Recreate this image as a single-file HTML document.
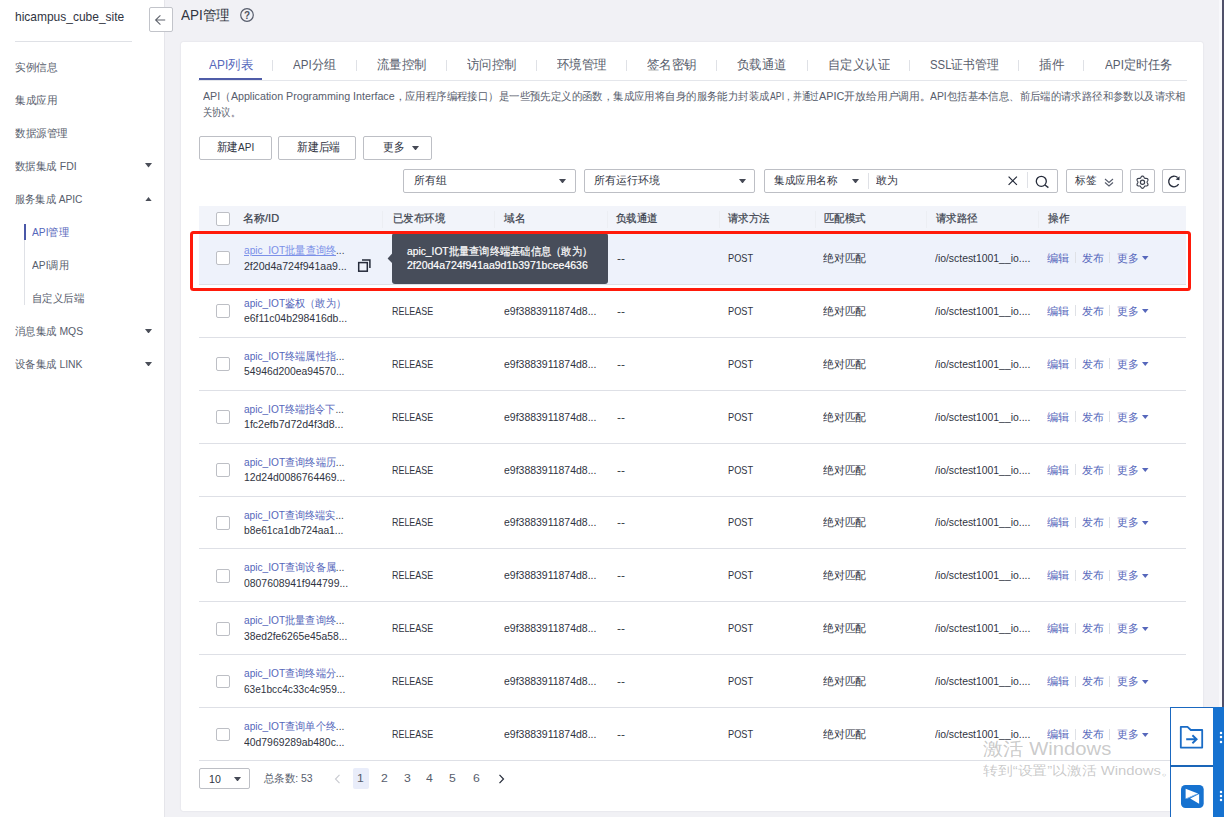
<!DOCTYPE html><html><head><meta charset="utf-8"><style>
html,body{margin:0;padding:0;}body{width:1224px;height:817px;overflow:hidden;position:relative;background:#f1f1f5;font-family:"Liberation Sans",sans-serif;}
.t{position:absolute;white-space:nowrap;line-height:16px;height:16px;transform-origin:0 50%;}
</style></head><body>
<div style="position:absolute;left:0px;top:0px;width:164.3px;height:817px;background:#fff"></div>
<div style="position:absolute;left:1219px;top:0px;width:2.6px;height:707px;background:#f8f8fb"></div>
<div style="position:absolute;left:1221.6px;top:0px;width:2.4px;height:707px;background:#50516a"></div>
<div style="position:absolute;left:164.3px;top:0px;width:1.2px;height:817px;background:#e5e5ea"></div>
<div style="position:absolute;left:181px;top:41.5px;width:1022px;height:769px;background:#fff;border-radius:2px;box-shadow:0 0 1.5px rgba(40,40,70,0.16)"></div>
<div style="position:absolute;left:15px;top:41px;width:117px;height:1px;background:#dfe1e6"></div>
<div style="position:absolute;left:24px;top:224px;width:1.3px;height:81px;background:#dfe1e6"></div>
<div style="position:absolute;left:24px;top:224px;width:1.6px;height:16px;background:#4a58a8"></div>
<svg style="position:absolute;left:144.5px;top:163.25px" width="7" height="4.5"><path d="M0 0H7L3.5 4.5Z" fill="#4a4e58"/></svg>
<svg style="position:absolute;left:144.5px;top:328.75px" width="7" height="4.5"><path d="M0 0H7L3.5 4.5Z" fill="#4a4e58"/></svg>
<svg style="position:absolute;left:144.5px;top:361.75px" width="7" height="4.5"><path d="M0 0H7L3.5 4.5Z" fill="#4a4e58"/></svg>
<svg style="position:absolute;left:144.5px;top:196.75px" width="7" height="4.5"><path d="M0 4.5H7L3.5 0Z" fill="#4a4e58"/></svg>
<div style="position:absolute;left:149px;top:7.4px;width:23.5px;height:24.2px;box-sizing:border-box;border:1px solid #c2c4ca;border-radius:2px;background:#fff"></div>
<svg style="position:absolute;left:149px;top:7.9px" width="24" height="24"><path d="M16.2 12H6.6M11.4 7.4L6.6 12L11.4 16.6" fill="none" stroke="#5f636d" stroke-width="1.05"/></svg>
<svg style="position:absolute;left:240px;top:8.2px" width="14" height="14"><circle cx="7" cy="7" r="6.3" fill="none" stroke="#575d6c" stroke-width="1.2"/><text x="7" y="10.6" text-anchor="middle" font-size="10" font-weight="bold" font-family="Liberation Sans" fill="#4f535e">?</text></svg>
<div style="position:absolute;left:272.4px;top:60px;width:1px;height:11px;background:#dfe1e6"></div>
<div style="position:absolute;left:356px;top:60px;width:1px;height:11px;background:#dfe1e6"></div>
<div style="position:absolute;left:445.5px;top:60px;width:1px;height:11px;background:#dfe1e6"></div>
<div style="position:absolute;left:535.8px;top:60px;width:1px;height:11px;background:#dfe1e6"></div>
<div style="position:absolute;left:626px;top:60px;width:1px;height:11px;background:#dfe1e6"></div>
<div style="position:absolute;left:716px;top:60px;width:1px;height:11px;background:#dfe1e6"></div>
<div style="position:absolute;left:806.5px;top:60px;width:1px;height:11px;background:#dfe1e6"></div>
<div style="position:absolute;left:908.8px;top:60px;width:1px;height:11px;background:#dfe1e6"></div>
<div style="position:absolute;left:1018px;top:60px;width:1px;height:11px;background:#dfe1e6"></div>
<div style="position:absolute;left:1083px;top:60px;width:1px;height:11px;background:#dfe1e6"></div>
<div style="position:absolute;left:198px;top:80px;width:989px;height:1px;background:#e4e6eb"></div>
<div style="position:absolute;left:198.7px;top:78.4px;width:63.3px;height:2px;background:#4f5ca8"></div>
<div style="position:absolute;left:199.2px;top:135.7px;width:72.5px;height:24.100000000000023px;box-sizing:border-box;border:1px solid #bdbfc5;border-radius:2px;background:#fff"></div>
<div style="position:absolute;left:278.3px;top:135.7px;width:77.69999999999999px;height:24.100000000000023px;box-sizing:border-box;border:1px solid #bdbfc5;border-radius:2px;background:#fff"></div>
<div style="position:absolute;left:363.4px;top:135.7px;width:68.90000000000003px;height:24.100000000000023px;box-sizing:border-box;border:1px solid #bdbfc5;border-radius:2px;background:#fff"></div>
<svg style="position:absolute;left:412.0px;top:145.75px" width="7" height="4.5"><path d="M0 0H7L3.5 4.5Z" fill="#454955"/></svg>
<div style="position:absolute;left:402.8px;top:169.3px;width:172.90000000000003px;height:23.299999999999983px;box-sizing:border-box;border:1px solid #bdbfc5;border-radius:2px;background:#fff"></div>
<svg style="position:absolute;left:559.1px;top:178.75px" width="7" height="4.5"><path d="M0 0H7L3.5 4.5Z" fill="#454955"/></svg>
<div style="position:absolute;left:583.5px;top:169.3px;width:171.70000000000005px;height:23.299999999999983px;box-sizing:border-box;border:1px solid #bdbfc5;border-radius:2px;background:#fff"></div>
<svg style="position:absolute;left:739.3px;top:178.75px" width="7" height="4.5"><path d="M0 0H7L3.5 4.5Z" fill="#454955"/></svg>
<div style="position:absolute;left:764px;top:169.3px;width:293.5999999999999px;height:23.299999999999983px;box-sizing:border-box;border:1px solid #bdbfc5;border-radius:2px;background:#fff"></div>
<svg style="position:absolute;left:851.5px;top:178.75px" width="7" height="4.5"><path d="M0 0H7L3.5 4.5Z" fill="#454955"/></svg>
<div style="position:absolute;left:867.5px;top:173px;width:1px;height:16px;background:#dfe1e6"></div>
<svg style="position:absolute;left:1008px;top:176.4px" width="9.5" height="9.5"><path d="M0.6 0.6L8.9 8.9M8.9 0.6L0.6 8.9" stroke="#252b3a" stroke-width="1.2"/></svg>
<div style="position:absolute;left:1026.7px;top:172px;width:1px;height:16px;background:#dfe1e6"></div>
<svg style="position:absolute;left:1035px;top:174.5px" width="15" height="14"><circle cx="6.3" cy="6.3" r="5" fill="none" stroke="#252b3a" stroke-width="1.3"/><path d="M10 10L13.4 12.6" stroke="#252b3a" stroke-width="1.4"/></svg>
<div style="position:absolute;left:1065.5px;top:169.3px;width:57.90000000000009px;height:23.299999999999983px;box-sizing:border-box;border:1px solid #bdbfc5;border-radius:2px;background:#fff"></div>
<svg style="position:absolute;left:1103.5px;top:178px" width="10" height="9"><path d="M1 1L5 4.5L9 1M1 4.5L5 8L9 4.5" fill="none" stroke="#575d6c" stroke-width="1.1"/></svg>
<div style="position:absolute;left:1130.4px;top:169.3px;width:25.09999999999991px;height:23.299999999999983px;box-sizing:border-box;border:1px solid #bdbfc5;border-radius:2px;background:#fff"></div>
<svg style="position:absolute;left:1135.2px;top:174.5px" width="15" height="15"><path d="M12.05 7.20L12.10 7.50L12.24 7.82L12.45 8.18L12.67 8.58L12.86 9.02L12.97 9.46L12.96 9.89L12.83 10.27L12.56 10.58L12.19 10.80L11.75 10.93L11.28 10.98L10.83 10.99L10.41 11.00L10.06 11.03L9.78 11.14L9.54 11.34L9.33 11.62L9.12 11.98L8.88 12.37L8.60 12.75L8.27 13.07L7.90 13.28L7.50 13.35L7.10 13.28L6.73 13.07L6.40 12.75L6.12 12.37L5.88 11.98L5.67 11.62L5.46 11.34L5.23 11.14L4.94 11.03L4.59 11.00L4.17 10.99L3.72 10.98L3.25 10.93L2.81 10.80L2.44 10.58L2.17 10.27L2.04 9.89L2.03 9.46L2.14 9.02L2.33 8.58L2.55 8.18L2.76 7.82L2.90 7.50L2.95 7.20L2.90 6.90L2.76 6.58L2.55 6.22L2.33 5.82L2.14 5.38L2.03 4.94L2.04 4.51L2.17 4.13L2.44 3.82L2.81 3.60L3.25 3.47L3.72 3.42L4.17 3.41L4.59 3.40L4.94 3.37L5.22 3.26L5.46 3.06L5.67 2.78L5.88 2.42L6.12 2.03L6.40 1.65L6.73 1.33L7.10 1.12L7.50 1.05L7.90 1.12L8.27 1.33L8.60 1.65L8.88 2.03L9.12 2.42L9.33 2.78L9.54 3.06L9.78 3.26L10.06 3.37L10.41 3.40L10.83 3.41L11.28 3.42L11.75 3.47L12.19 3.60L12.56 3.82L12.83 4.12L12.96 4.51L12.97 4.94L12.86 5.38L12.67 5.82L12.45 6.22L12.24 6.58L12.10 6.90L12.05 7.20Z" fill="none" stroke="#3a3f4c" stroke-width="1.15" stroke-linejoin="round"/><circle cx="7.5" cy="7.2" r="2.1" fill="none" stroke="#3a3f4c" stroke-width="1.2"/></svg>
<div style="position:absolute;left:1162.3px;top:169.3px;width:23.700000000000045px;height:23.299999999999983px;box-sizing:border-box;border:1px solid #bdbfc5;border-radius:2px;background:#fff"></div>
<svg style="position:absolute;left:1167px;top:175px" width="14" height="13"><path d="M10.6 2.6A5.3 5.3 0 1 0 11.6 9.2" fill="none" stroke="#252b3a" stroke-width="1.3"/><path d="M12.6 1.2L12.4 5.2L8.6 4.4Z" fill="#252b3a"/></svg>
<div style="position:absolute;left:198.7px;top:206.2px;width:987.3px;height:25.5px;background:#f2f4fa"></div>
<div style="position:absolute;left:216px;top:211.8px;width:13.6px;height:13.9px;box-sizing:border-box;border:1px solid #bdbfc5;border-radius:2px;background:#fff"></div>
<div style="position:absolute;left:382.3px;top:210.5px;width:1px;height:17px;background:#eceef3"></div>
<div style="position:absolute;left:494px;top:210.5px;width:1px;height:17px;background:#eceef3"></div>
<div style="position:absolute;left:606.5px;top:210.5px;width:1px;height:17px;background:#eceef3"></div>
<div style="position:absolute;left:718.8px;top:210.5px;width:1px;height:17px;background:#eceef3"></div>
<div style="position:absolute;left:814.7px;top:210.5px;width:1px;height:17px;background:#eceef3"></div>
<div style="position:absolute;left:925.8px;top:210.5px;width:1px;height:17px;background:#eceef3"></div>
<div style="position:absolute;left:1037.6px;top:210.5px;width:1px;height:17px;background:#eceef3"></div>
<div style="position:absolute;left:198.7px;top:232.0px;width:987.3px;height:52.4px;background:#eef2fb"></div>
<div style="position:absolute;left:198.7px;top:283.9px;width:987.3px;height:1px;background:#dee0e6"></div>
<div style="position:absolute;left:216px;top:251.4px;width:13.6px;height:13.9px;box-sizing:border-box;border:1px solid #bdbfc5;border-radius:2px;background:#fff"></div>
<div style="position:absolute;left:1075.2px;top:252.45px;width:1px;height:11px;background:#dfe1e6"></div>
<div style="position:absolute;left:1109.4px;top:252.45px;width:1px;height:11px;background:#dfe1e6"></div>
<svg style="position:absolute;left:1142.45px;top:256.45px" width="6.5" height="4"><path d="M0 0H6.5L3.25 4Z" fill="#5667bb"/></svg>
<div style="position:absolute;left:198.7px;top:336.79999999999995px;width:987.3px;height:1px;background:#dee0e6"></div>
<div style="position:absolute;left:216px;top:304.29999999999995px;width:13.6px;height:13.9px;box-sizing:border-box;border:1px solid #bdbfc5;border-radius:2px;background:#fff"></div>
<div style="position:absolute;left:1075.2px;top:305.34999999999997px;width:1px;height:11px;background:#dfe1e6"></div>
<div style="position:absolute;left:1109.4px;top:305.34999999999997px;width:1px;height:11px;background:#dfe1e6"></div>
<svg style="position:absolute;left:1142.45px;top:309.34999999999997px" width="6.5" height="4"><path d="M0 0H6.5L3.25 4Z" fill="#5667bb"/></svg>
<div style="position:absolute;left:198.7px;top:389.7px;width:987.3px;height:1px;background:#dee0e6"></div>
<div style="position:absolute;left:216px;top:357.2px;width:13.6px;height:13.9px;box-sizing:border-box;border:1px solid #bdbfc5;border-radius:2px;background:#fff"></div>
<div style="position:absolute;left:1075.2px;top:358.25px;width:1px;height:11px;background:#dfe1e6"></div>
<div style="position:absolute;left:1109.4px;top:358.25px;width:1px;height:11px;background:#dfe1e6"></div>
<svg style="position:absolute;left:1142.45px;top:362.25px" width="6.5" height="4"><path d="M0 0H6.5L3.25 4Z" fill="#5667bb"/></svg>
<div style="position:absolute;left:198.7px;top:442.59999999999997px;width:987.3px;height:1px;background:#dee0e6"></div>
<div style="position:absolute;left:216px;top:410.09999999999997px;width:13.6px;height:13.9px;box-sizing:border-box;border:1px solid #bdbfc5;border-radius:2px;background:#fff"></div>
<div style="position:absolute;left:1075.2px;top:411.15px;width:1px;height:11px;background:#dfe1e6"></div>
<div style="position:absolute;left:1109.4px;top:411.15px;width:1px;height:11px;background:#dfe1e6"></div>
<svg style="position:absolute;left:1142.45px;top:415.15px" width="6.5" height="4"><path d="M0 0H6.5L3.25 4Z" fill="#5667bb"/></svg>
<div style="position:absolute;left:198.7px;top:495.5px;width:987.3px;height:1px;background:#dee0e6"></div>
<div style="position:absolute;left:216px;top:463.0px;width:13.6px;height:13.9px;box-sizing:border-box;border:1px solid #bdbfc5;border-radius:2px;background:#fff"></div>
<div style="position:absolute;left:1075.2px;top:464.05px;width:1px;height:11px;background:#dfe1e6"></div>
<div style="position:absolute;left:1109.4px;top:464.05px;width:1px;height:11px;background:#dfe1e6"></div>
<svg style="position:absolute;left:1142.45px;top:468.05px" width="6.5" height="4"><path d="M0 0H6.5L3.25 4Z" fill="#5667bb"/></svg>
<div style="position:absolute;left:198.7px;top:548.4px;width:987.3px;height:1px;background:#dee0e6"></div>
<div style="position:absolute;left:216px;top:515.9px;width:13.6px;height:13.9px;box-sizing:border-box;border:1px solid #bdbfc5;border-radius:2px;background:#fff"></div>
<div style="position:absolute;left:1075.2px;top:516.95px;width:1px;height:11px;background:#dfe1e6"></div>
<div style="position:absolute;left:1109.4px;top:516.95px;width:1px;height:11px;background:#dfe1e6"></div>
<svg style="position:absolute;left:1142.45px;top:520.95px" width="6.5" height="4"><path d="M0 0H6.5L3.25 4Z" fill="#5667bb"/></svg>
<div style="position:absolute;left:198.7px;top:601.3px;width:987.3px;height:1px;background:#dee0e6"></div>
<div style="position:absolute;left:216px;top:568.8px;width:13.6px;height:13.9px;box-sizing:border-box;border:1px solid #bdbfc5;border-radius:2px;background:#fff"></div>
<div style="position:absolute;left:1075.2px;top:569.85px;width:1px;height:11px;background:#dfe1e6"></div>
<div style="position:absolute;left:1109.4px;top:569.85px;width:1px;height:11px;background:#dfe1e6"></div>
<svg style="position:absolute;left:1142.45px;top:573.85px" width="6.5" height="4"><path d="M0 0H6.5L3.25 4Z" fill="#5667bb"/></svg>
<div style="position:absolute;left:198.7px;top:654.1999999999999px;width:987.3px;height:1px;background:#dee0e6"></div>
<div style="position:absolute;left:216px;top:621.6999999999999px;width:13.6px;height:13.9px;box-sizing:border-box;border:1px solid #bdbfc5;border-radius:2px;background:#fff"></div>
<div style="position:absolute;left:1075.2px;top:622.75px;width:1px;height:11px;background:#dfe1e6"></div>
<div style="position:absolute;left:1109.4px;top:622.75px;width:1px;height:11px;background:#dfe1e6"></div>
<svg style="position:absolute;left:1142.45px;top:626.75px" width="6.5" height="4"><path d="M0 0H6.5L3.25 4Z" fill="#5667bb"/></svg>
<div style="position:absolute;left:198.7px;top:707.1px;width:987.3px;height:1px;background:#dee0e6"></div>
<div style="position:absolute;left:216px;top:674.6px;width:13.6px;height:13.9px;box-sizing:border-box;border:1px solid #bdbfc5;border-radius:2px;background:#fff"></div>
<div style="position:absolute;left:1075.2px;top:675.6500000000001px;width:1px;height:11px;background:#dfe1e6"></div>
<div style="position:absolute;left:1109.4px;top:675.6500000000001px;width:1px;height:11px;background:#dfe1e6"></div>
<svg style="position:absolute;left:1142.45px;top:679.6500000000001px" width="6.5" height="4"><path d="M0 0H6.5L3.25 4Z" fill="#5667bb"/></svg>
<div style="position:absolute;left:198.7px;top:759.9999999999999px;width:987.3px;height:1px;background:#dee0e6"></div>
<div style="position:absolute;left:216px;top:727.4999999999999px;width:13.6px;height:13.9px;box-sizing:border-box;border:1px solid #bdbfc5;border-radius:2px;background:#fff"></div>
<div style="position:absolute;left:1075.2px;top:728.55px;width:1px;height:11px;background:#dfe1e6"></div>
<div style="position:absolute;left:1109.4px;top:728.55px;width:1px;height:11px;background:#dfe1e6"></div>
<svg style="position:absolute;left:1142.45px;top:732.55px" width="6.5" height="4"><path d="M0 0H6.5L3.25 4Z" fill="#5667bb"/></svg>
<svg style="position:absolute;left:356px;top:258px" width="16" height="16"><rect x="2.7" y="4.6" width="8.6" height="8.6" fill="none" stroke="#252b3a" stroke-width="1.5"/><path d="M6 2.1H13.9V10" fill="none" stroke="#252b3a" stroke-width="1.5"/></svg>
<div style="position:absolute;left:392.2px;top:233px;width:215.5px;height:51.4px;background:#474d5a;border-radius:3px"></div>
<svg style="position:absolute;left:386.5px;top:252px" width="7" height="13"><path d="M6.5 0L0.6 6.4L6.5 12.6Z" fill="#474d5a"/></svg>
<div style="position:absolute;left:190px;top:231.1px;width:1000.6px;height:59.9px;box-sizing:border-box;border:3px solid #ff1a0a;border-radius:3.5px"></div>
<div style="position:absolute;left:199.2px;top:768px;width:51.3px;height:21px;box-sizing:border-box;border:1px solid #bdbfc5;border-radius:2px;background:#fff"></div>
<svg style="position:absolute;left:234.3px;top:776.55px" width="7" height="4.5"><path d="M0 0H7L3.5 4.5Z" fill="#454955"/></svg>
<svg style="position:absolute;left:333.5px;top:773.5px" width="7" height="10"><path d="M5.5 0.8L1.5 5L5.5 9.2" fill="none" stroke="#c8cad0" stroke-width="1.1"/></svg>
<div style="position:absolute;left:352.5px;top:768px;width:16.1px;height:21px;background:#e9edfa;border-radius:2px"></div>
<svg style="position:absolute;left:498px;top:773.5px" width="7" height="10"><path d="M1.5 0.8L5.5 5L1.5 9.2" fill="none" stroke="#252b3a" stroke-width="1.2"/></svg>
<div style="position:absolute;left:1170px;top:706.8px;width:54px;height:111px;background:#fff;box-sizing:border-box;border:1px solid #1a68c0;border-right:none"></div>
<div style="position:absolute;left:1213px;top:706.8px;width:11px;height:111px;background:#1672d0"></div>
<div style="position:absolute;left:1170px;top:765.3px;width:43px;height:1.5px;background:#1a65b8"></div>
<svg style="position:absolute;left:1179px;top:725px" width="26" height="25"><path d="M1.8 1.8H8.5L11.8 5H23.2V22.6H1.8Z" fill="none" stroke="#1a6cc6" stroke-width="1.8" stroke-linejoin="round"/><path d="M7.2 14.2H17.2M13.4 10.2L17.6 14.2L13.4 18.2" fill="none" stroke="#1a6cc6" stroke-width="1.9"/></svg>
<svg style="position:absolute;left:1180.5px;top:784.7px" width="23" height="23"><rect x="0" y="0" width="22.7" height="23" rx="4.5" fill="#1672d0"/><path d="M4.6 3.7L17 8.4L4.6 13.8Z" fill="#fff"/><path d="M9.2 13.5L18.1 8.9V18.7Z" fill="#fff"/><path d="M6 13.4L17 8.6" stroke="#8fbff0" stroke-width="0.8"/></svg>
<svg style="position:absolute;left:1218.7px;top:731.1px" width="4" height="4"><circle cx="2" cy="2" r="1.25" fill="#fff"/></svg>
<svg style="position:absolute;left:1218.7px;top:735.4px" width="4" height="4"><circle cx="2" cy="2" r="1.25" fill="#fff"/></svg>
<svg style="position:absolute;left:1218.7px;top:739.7px" width="4" height="4"><circle cx="2" cy="2" r="1.25" fill="#fff"/></svg>
<svg style="position:absolute;left:1218.7px;top:789.9px" width="4" height="4"><circle cx="2" cy="2" r="1.25" fill="#fff"/></svg>
<svg style="position:absolute;left:1218.7px;top:794.1px" width="4" height="4"><circle cx="2" cy="2" r="1.25" fill="#fff"/></svg>
<svg style="position:absolute;left:1218.7px;top:798.3px" width="4" height="4"><circle cx="2" cy="2" r="1.25" fill="#fff"/></svg>
<div class="t" id="t0" style="left:14.90px;top:8.60px;font-size:13px;color:#30343f;transform:scaleX(0.9213);">hicampus_cube_site</div>
<div class="t" id="t1" style="left:14.90px;top:58.90px;font-size:11px;color:#575d6c;transform:scaleX(0.9636);">实例信息</div>
<div class="t" id="t2" style="left:14.90px;top:91.90px;font-size:11px;color:#575d6c;transform:scaleX(0.9636);">集成应用</div>
<div class="t" id="t3" style="left:14.90px;top:124.90px;font-size:11px;color:#575d6c;transform:scaleX(0.9600);">数据源管理</div>
<div class="t" id="t4" style="left:14.90px;top:157.90px;font-size:11px;color:#575d6c;transform:scaleX(0.9524);">数据集成 FDI</div>
<div class="t" id="t5" style="left:14.90px;top:190.90px;font-size:11px;color:#575d6c;transform:scaleX(0.9280);">服务集成 APIC</div>
<div class="t" id="t6" style="left:32.30px;top:223.90px;font-size:11px;color:#5667bb;transform:scaleX(0.9287);">API管理</div>
<div class="t" id="t7" style="left:32.30px;top:256.90px;font-size:11px;color:#575d6c;transform:scaleX(0.9287);">API调用</div>
<div class="t" id="t8" style="left:32.30px;top:289.90px;font-size:11px;color:#575d6c;transform:scaleX(0.9527);">自定义后端</div>
<div class="t" id="t9" style="left:14.90px;top:322.90px;font-size:11px;color:#575d6c;transform:scaleX(0.9442);">消息集成 MQS</div>
<div class="t" id="t10" style="left:14.90px;top:355.90px;font-size:11px;color:#575d6c;transform:scaleX(0.9438);">设备集成 LINK</div>
<div class="t" id="t11" style="left:181.20px;top:7.20px;font-size:14px;color:#30343f;transform:scaleX(0.9648);">API管理</div>
<div class="t" id="t12" style="left:208.90px;top:57.30px;font-size:12.5px;color:#5667bb;transform:scaleX(0.9533);">API列表</div>
<div class="t" id="t13" style="left:292.90px;top:57.30px;font-size:12.5px;color:#575d6c;transform:scaleX(0.9273);">API分组</div>
<div class="t" id="t14" style="left:376.90px;top:57.30px;font-size:12.5px;color:#575d6c;transform:scaleX(0.9519);">流量控制</div>
<div class="t" id="t15" style="left:466.90px;top:57.30px;font-size:12.5px;color:#575d6c;transform:scaleX(0.9538);">访问控制</div>
<div class="t" id="t16" style="left:556.90px;top:57.30px;font-size:12.5px;color:#575d6c;transform:scaleX(0.9577);">环境管理</div>
<div class="t" id="t17" style="left:646.90px;top:57.30px;font-size:12.5px;color:#575d6c;transform:scaleX(0.9577);">签名密钥</div>
<div class="t" id="t18" style="left:736.90px;top:57.30px;font-size:12.5px;color:#575d6c;transform:scaleX(0.9519);">负载通道</div>
<div class="t" id="t19" style="left:827.70px;top:57.30px;font-size:12.5px;color:#575d6c;transform:scaleX(0.9523);">自定义认证</div>
<div class="t" id="t20" style="left:929.60px;top:57.30px;font-size:12.5px;color:#575d6c;transform:scaleX(0.9096);">SSL证书管理</div>
<div class="t" id="t21" style="left:1038.50px;top:57.30px;font-size:12.5px;color:#575d6c;transform:scaleX(0.9692);">插件</div>
<div class="t" id="t22" style="left:1104.90px;top:57.30px;font-size:12.5px;color:#575d6c;transform:scaleX(0.9382);">API定时任务</div>
<div class="t" id="t23" style="left:202.90px;top:88.30px;font-size:11px;color:#575d6c;transform:scaleX(0.9703);">API（Application Programming Interface，</div>
<div class="t" id="t24" style="left:405.20px;top:88.30px;font-size:11px;color:#575d6c;transform:scaleX(0.9465);">应用程序编程接口）是一些预先定义的函数，集成应用将自身的服务能力封装成</div>
<div class="t" id="t25" style="left:769.60px;top:88.30px;font-size:11px;color:#575d6c;transform:scaleX(0.7937);">API，并通过</div>
<div class="t" id="t26" style="left:818.60px;top:88.30px;font-size:11px;color:#575d6c;transform:scaleX(0.9834);">APIC开放给用户调用。</div>
<div class="t" id="t27" style="left:930.40px;top:88.30px;font-size:11px;color:#575d6c;transform:scaleX(0.9448);">API包括基本信息、前后端的请求路径和参数以及请求相</div>
<div class="t" id="t28" style="left:202.90px;top:103.60px;font-size:11px;color:#575d6c;transform:scaleX(0.8364);">关协议。</div>
<div class="t" id="t29" style="left:217.00px;top:138.90px;font-size:11.5px;color:#30343f;transform:scaleX(0.8743);">新建API</div>
<div class="t" id="t30" style="left:296.90px;top:138.90px;font-size:11.5px;color:#30343f;transform:scaleX(0.9021);">新建后端</div>
<div class="t" id="t31" style="left:382.50px;top:138.90px;font-size:11.5px;color:#30343f;transform:scaleX(0.8875);">更多</div>
<div class="t" id="t32" style="left:413.80px;top:171.90px;font-size:11px;color:#30343f;transform:scaleX(0.9788);">所有组</div>
<div class="t" id="t33" style="left:593.80px;top:171.90px;font-size:11px;color:#30343f;transform:scaleX(0.9970);">所有运行环境</div>
<div class="t" id="t34" style="left:773.80px;top:171.90px;font-size:11px;color:#30343f;transform:scaleX(0.9561);">集成应用名称</div>
<div class="t" id="t35" style="left:876.10px;top:171.90px;font-size:11px;color:#30343f;transform:scaleX(0.9909);">敢为</div>
<div class="t" id="t36" style="left:1074.60px;top:171.90px;font-size:11px;color:#30343f;transform:scaleX(0.9682);">标签</div>
<div class="t" id="t37" style="left:243.40px;top:210.30px;font-size:11px;color:#3a3f4c;transform:scaleX(1.0010);-webkit-text-stroke:0.2px #3a3f4c;">名称/ID</div>
<div class="t" id="t38" style="left:392.50px;top:210.30px;font-size:11px;color:#3a3f4c;transform:scaleX(0.9455);-webkit-text-stroke:0.2px #3a3f4c;">已发布环境</div>
<div class="t" id="t39" style="left:504.30px;top:210.30px;font-size:11px;color:#3a3f4c;transform:scaleX(0.9682);-webkit-text-stroke:0.2px #3a3f4c;">域名</div>
<div class="t" id="t40" style="left:616.20px;top:210.30px;font-size:11px;color:#3a3f4c;transform:scaleX(0.9545);-webkit-text-stroke:0.2px #3a3f4c;">负载通道</div>
<div class="t" id="t41" style="left:728.40px;top:210.30px;font-size:11px;color:#3a3f4c;transform:scaleX(0.9500);-webkit-text-stroke:0.2px #3a3f4c;">请求方法</div>
<div class="t" id="t42" style="left:823.80px;top:210.30px;font-size:11px;color:#3a3f4c;transform:scaleX(0.9545);-webkit-text-stroke:0.2px #3a3f4c;">匹配模式</div>
<div class="t" id="t43" style="left:935.90px;top:210.30px;font-size:11px;color:#3a3f4c;transform:scaleX(0.9545);-webkit-text-stroke:0.2px #3a3f4c;">请求路径</div>
<div class="t" id="t44" style="left:1047.70px;top:210.30px;font-size:11px;color:#3a3f4c;transform:scaleX(0.9682);-webkit-text-stroke:0.2px #3a3f4c;">操作</div>
<div class="t" id="t45" style="left:244.00px;top:242.00px;font-size:11px;color:#7b90e8;transform:scaleX(0.9236);text-decoration:underline;">apic_IOT批量查询终<span style="display:inline-block;color:#3a3f4c">...</span></div>
<div class="t" id="t46" style="left:244.00px;top:257.50px;font-size:11px;color:#30343f;transform:scaleX(0.9603);">2f20d4a724f941aa9...</div>
<div class="t" id="t47" style="left:616.50px;top:249.95px;font-size:11px;color:#30343f;transform:scaleX(1.0917);">--</div>
<div class="t" id="t48" style="left:728.30px;top:249.95px;font-size:11px;color:#30343f;transform:scaleX(0.8380);">POST</div>
<div class="t" id="t49" style="left:822.70px;top:249.95px;font-size:11px;color:#30343f;transform:scaleX(0.9841);">绝对匹配</div>
<div class="t" id="t50" style="left:935.40px;top:249.95px;font-size:11px;color:#30343f;transform:scaleX(0.9444);">/io/sctest1001__io....</div>
<div class="t" id="t51" style="left:1047.20px;top:249.95px;font-size:11px;color:#5667bb;transform:scaleX(1.0227);">编辑</div>
<div class="t" id="t52" style="left:1081.90px;top:249.95px;font-size:11px;color:#5667bb;transform:scaleX(0.9909);">发布</div>
<div class="t" id="t53" style="left:1116.80px;top:249.95px;font-size:11px;color:#5667bb;transform:scaleX(0.9909);">更多</div>
<div class="t" id="t54" style="left:244.00px;top:294.90px;font-size:11px;color:#5667bb;transform:scaleX(0.9201);">apic_IOT鉴权（敢为）</div>
<div class="t" id="t55" style="left:244.00px;top:310.40px;font-size:11px;color:#30343f;transform:scaleX(0.9486);">e6f11c04b298416db...</div>
<div class="t" id="t56" style="left:391.70px;top:302.85px;font-size:11px;color:#30343f;transform:scaleX(0.8118);">RELEASE</div>
<div class="t" id="t57" style="left:504.10px;top:302.85px;font-size:11px;color:#30343f;transform:scaleX(0.9520);">e9f3883911874d8...</div>
<div class="t" id="t58" style="left:616.50px;top:302.85px;font-size:11px;color:#30343f;transform:scaleX(1.0917);">--</div>
<div class="t" id="t59" style="left:728.30px;top:302.85px;font-size:11px;color:#30343f;transform:scaleX(0.8380);">POST</div>
<div class="t" id="t60" style="left:822.70px;top:302.85px;font-size:11px;color:#30343f;transform:scaleX(0.9841);">绝对匹配</div>
<div class="t" id="t61" style="left:935.40px;top:302.85px;font-size:11px;color:#30343f;transform:scaleX(0.9444);">/io/sctest1001__io....</div>
<div class="t" id="t62" style="left:1047.20px;top:302.85px;font-size:11px;color:#5667bb;transform:scaleX(1.0227);">编辑</div>
<div class="t" id="t63" style="left:1081.90px;top:302.85px;font-size:11px;color:#5667bb;transform:scaleX(0.9909);">发布</div>
<div class="t" id="t64" style="left:1116.80px;top:302.85px;font-size:11px;color:#5667bb;transform:scaleX(0.9909);">更多</div>
<div class="t" id="t65" style="left:244.00px;top:347.80px;font-size:11px;color:#5667bb;transform:scaleX(0.9218);">apic_IOT终端属性指<span style="display:inline-block;color:#3a3f4c">...</span></div>
<div class="t" id="t66" style="left:244.00px;top:363.30px;font-size:11px;color:#30343f;transform:scaleX(0.9387);">54946d200ea94570...</div>
<div class="t" id="t67" style="left:391.70px;top:355.75px;font-size:11px;color:#30343f;transform:scaleX(0.8118);">RELEASE</div>
<div class="t" id="t68" style="left:504.10px;top:355.75px;font-size:11px;color:#30343f;transform:scaleX(0.9520);">e9f3883911874d8...</div>
<div class="t" id="t69" style="left:616.50px;top:355.75px;font-size:11px;color:#30343f;transform:scaleX(1.0917);">--</div>
<div class="t" id="t70" style="left:728.30px;top:355.75px;font-size:11px;color:#30343f;transform:scaleX(0.8380);">POST</div>
<div class="t" id="t71" style="left:822.70px;top:355.75px;font-size:11px;color:#30343f;transform:scaleX(0.9841);">绝对匹配</div>
<div class="t" id="t72" style="left:935.40px;top:355.75px;font-size:11px;color:#30343f;transform:scaleX(0.9444);">/io/sctest1001__io....</div>
<div class="t" id="t73" style="left:1047.20px;top:355.75px;font-size:11px;color:#5667bb;transform:scaleX(1.0227);">编辑</div>
<div class="t" id="t74" style="left:1081.90px;top:355.75px;font-size:11px;color:#5667bb;transform:scaleX(0.9909);">发布</div>
<div class="t" id="t75" style="left:1116.80px;top:355.75px;font-size:11px;color:#5667bb;transform:scaleX(0.9909);">更多</div>
<div class="t" id="t76" style="left:244.00px;top:400.70px;font-size:11px;color:#5667bb;transform:scaleX(0.9172);">apic_IOT终端指令下<span style="display:inline-block;color:#3a3f4c">...</span></div>
<div class="t" id="t77" style="left:244.00px;top:416.20px;font-size:11px;color:#30343f;transform:scaleX(0.9615);">1fc2efb7d72d4f3d8...</div>
<div class="t" id="t78" style="left:391.70px;top:408.65px;font-size:11px;color:#30343f;transform:scaleX(0.8118);">RELEASE</div>
<div class="t" id="t79" style="left:504.10px;top:408.65px;font-size:11px;color:#30343f;transform:scaleX(0.9520);">e9f3883911874d8...</div>
<div class="t" id="t80" style="left:616.50px;top:408.65px;font-size:11px;color:#30343f;transform:scaleX(1.0917);">--</div>
<div class="t" id="t81" style="left:728.30px;top:408.65px;font-size:11px;color:#30343f;transform:scaleX(0.8380);">POST</div>
<div class="t" id="t82" style="left:822.70px;top:408.65px;font-size:11px;color:#30343f;transform:scaleX(0.9841);">绝对匹配</div>
<div class="t" id="t83" style="left:935.40px;top:408.65px;font-size:11px;color:#30343f;transform:scaleX(0.9444);">/io/sctest1001__io....</div>
<div class="t" id="t84" style="left:1047.20px;top:408.65px;font-size:11px;color:#5667bb;transform:scaleX(1.0227);">编辑</div>
<div class="t" id="t85" style="left:1081.90px;top:408.65px;font-size:11px;color:#5667bb;transform:scaleX(0.9909);">发布</div>
<div class="t" id="t86" style="left:1116.80px;top:408.65px;font-size:11px;color:#5667bb;transform:scaleX(0.9909);">更多</div>
<div class="t" id="t87" style="left:244.00px;top:453.60px;font-size:11px;color:#5667bb;transform:scaleX(0.9218);">apic_IOT查询终端历<span style="display:inline-block;color:#3a3f4c">...</span></div>
<div class="t" id="t88" style="left:244.00px;top:469.10px;font-size:11px;color:#30343f;transform:scaleX(0.9452);">12d24d0086764469...</div>
<div class="t" id="t89" style="left:391.70px;top:461.55px;font-size:11px;color:#30343f;transform:scaleX(0.8118);">RELEASE</div>
<div class="t" id="t90" style="left:504.10px;top:461.55px;font-size:11px;color:#30343f;transform:scaleX(0.9520);">e9f3883911874d8...</div>
<div class="t" id="t91" style="left:616.50px;top:461.55px;font-size:11px;color:#30343f;transform:scaleX(1.0917);">--</div>
<div class="t" id="t92" style="left:728.30px;top:461.55px;font-size:11px;color:#30343f;transform:scaleX(0.8380);">POST</div>
<div class="t" id="t93" style="left:822.70px;top:461.55px;font-size:11px;color:#30343f;transform:scaleX(0.9841);">绝对匹配</div>
<div class="t" id="t94" style="left:935.40px;top:461.55px;font-size:11px;color:#30343f;transform:scaleX(0.9444);">/io/sctest1001__io....</div>
<div class="t" id="t95" style="left:1047.20px;top:461.55px;font-size:11px;color:#5667bb;transform:scaleX(1.0227);">编辑</div>
<div class="t" id="t96" style="left:1081.90px;top:461.55px;font-size:11px;color:#5667bb;transform:scaleX(0.9909);">发布</div>
<div class="t" id="t97" style="left:1116.80px;top:461.55px;font-size:11px;color:#5667bb;transform:scaleX(0.9909);">更多</div>
<div class="t" id="t98" style="left:244.00px;top:506.50px;font-size:11px;color:#5667bb;transform:scaleX(0.9172);">apic_IOT查询终端实<span style="display:inline-block;color:#3a3f4c">...</span></div>
<div class="t" id="t99" style="left:244.00px;top:522.00px;font-size:11px;color:#30343f;transform:scaleX(0.9339);">b8e61ca1db724aa1...</div>
<div class="t" id="t100" style="left:391.70px;top:514.45px;font-size:11px;color:#30343f;transform:scaleX(0.8118);">RELEASE</div>
<div class="t" id="t101" style="left:504.10px;top:514.45px;font-size:11px;color:#30343f;transform:scaleX(0.9520);">e9f3883911874d8...</div>
<div class="t" id="t102" style="left:616.50px;top:514.45px;font-size:11px;color:#30343f;transform:scaleX(1.0917);">--</div>
<div class="t" id="t103" style="left:728.30px;top:514.45px;font-size:11px;color:#30343f;transform:scaleX(0.8380);">POST</div>
<div class="t" id="t104" style="left:822.70px;top:514.45px;font-size:11px;color:#30343f;transform:scaleX(0.9841);">绝对匹配</div>
<div class="t" id="t105" style="left:935.40px;top:514.45px;font-size:11px;color:#30343f;transform:scaleX(0.9444);">/io/sctest1001__io....</div>
<div class="t" id="t106" style="left:1047.20px;top:514.45px;font-size:11px;color:#5667bb;transform:scaleX(1.0227);">编辑</div>
<div class="t" id="t107" style="left:1081.90px;top:514.45px;font-size:11px;color:#5667bb;transform:scaleX(0.9909);">发布</div>
<div class="t" id="t108" style="left:1116.80px;top:514.45px;font-size:11px;color:#5667bb;transform:scaleX(0.9909);">更多</div>
<div class="t" id="t109" style="left:244.00px;top:559.40px;font-size:11px;color:#5667bb;transform:scaleX(0.9218);">apic_IOT查询设备属<span style="display:inline-block;color:#3a3f4c">...</span></div>
<div class="t" id="t110" style="left:244.00px;top:574.90px;font-size:11px;color:#30343f;transform:scaleX(0.9454);">0807608941f944799...</div>
<div class="t" id="t111" style="left:391.70px;top:567.35px;font-size:11px;color:#30343f;transform:scaleX(0.8118);">RELEASE</div>
<div class="t" id="t112" style="left:504.10px;top:567.35px;font-size:11px;color:#30343f;transform:scaleX(0.9520);">e9f3883911874d8...</div>
<div class="t" id="t113" style="left:616.50px;top:567.35px;font-size:11px;color:#30343f;transform:scaleX(1.0917);">--</div>
<div class="t" id="t114" style="left:728.30px;top:567.35px;font-size:11px;color:#30343f;transform:scaleX(0.8380);">POST</div>
<div class="t" id="t115" style="left:822.70px;top:567.35px;font-size:11px;color:#30343f;transform:scaleX(0.9841);">绝对匹配</div>
<div class="t" id="t116" style="left:935.40px;top:567.35px;font-size:11px;color:#30343f;transform:scaleX(0.9444);">/io/sctest1001__io....</div>
<div class="t" id="t117" style="left:1047.20px;top:567.35px;font-size:11px;color:#5667bb;transform:scaleX(1.0227);">编辑</div>
<div class="t" id="t118" style="left:1081.90px;top:567.35px;font-size:11px;color:#5667bb;transform:scaleX(0.9909);">发布</div>
<div class="t" id="t119" style="left:1116.80px;top:567.35px;font-size:11px;color:#5667bb;transform:scaleX(0.9909);">更多</div>
<div class="t" id="t120" style="left:244.00px;top:612.30px;font-size:11px;color:#5667bb;transform:scaleX(0.9218);">apic_IOT批量查询终<span style="display:inline-block;color:#3a3f4c">...</span></div>
<div class="t" id="t121" style="left:244.00px;top:627.80px;font-size:11px;color:#30343f;transform:scaleX(0.9382);">38ed2fe6265e45a58...</div>
<div class="t" id="t122" style="left:391.70px;top:620.25px;font-size:11px;color:#30343f;transform:scaleX(0.8118);">RELEASE</div>
<div class="t" id="t123" style="left:504.10px;top:620.25px;font-size:11px;color:#30343f;transform:scaleX(0.9520);">e9f3883911874d8...</div>
<div class="t" id="t124" style="left:616.50px;top:620.25px;font-size:11px;color:#30343f;transform:scaleX(1.0917);">--</div>
<div class="t" id="t125" style="left:728.30px;top:620.25px;font-size:11px;color:#30343f;transform:scaleX(0.8380);">POST</div>
<div class="t" id="t126" style="left:822.70px;top:620.25px;font-size:11px;color:#30343f;transform:scaleX(0.9841);">绝对匹配</div>
<div class="t" id="t127" style="left:935.40px;top:620.25px;font-size:11px;color:#30343f;transform:scaleX(0.9444);">/io/sctest1001__io....</div>
<div class="t" id="t128" style="left:1047.20px;top:620.25px;font-size:11px;color:#5667bb;transform:scaleX(1.0227);">编辑</div>
<div class="t" id="t129" style="left:1081.90px;top:620.25px;font-size:11px;color:#5667bb;transform:scaleX(0.9909);">发布</div>
<div class="t" id="t130" style="left:1116.80px;top:620.25px;font-size:11px;color:#5667bb;transform:scaleX(0.9909);">更多</div>
<div class="t" id="t131" style="left:244.00px;top:665.20px;font-size:11px;color:#5667bb;transform:scaleX(0.9218);">apic_IOT查询终端分<span style="display:inline-block;color:#3a3f4c">...</span></div>
<div class="t" id="t132" style="left:244.00px;top:680.70px;font-size:11px;color:#30343f;transform:scaleX(0.9192);">63e1bcc4c33c4c959...</div>
<div class="t" id="t133" style="left:391.70px;top:673.15px;font-size:11px;color:#30343f;transform:scaleX(0.8118);">RELEASE</div>
<div class="t" id="t134" style="left:504.10px;top:673.15px;font-size:11px;color:#30343f;transform:scaleX(0.9520);">e9f3883911874d8...</div>
<div class="t" id="t135" style="left:616.50px;top:673.15px;font-size:11px;color:#30343f;transform:scaleX(1.0917);">--</div>
<div class="t" id="t136" style="left:728.30px;top:673.15px;font-size:11px;color:#30343f;transform:scaleX(0.8380);">POST</div>
<div class="t" id="t137" style="left:822.70px;top:673.15px;font-size:11px;color:#30343f;transform:scaleX(0.9841);">绝对匹配</div>
<div class="t" id="t138" style="left:935.40px;top:673.15px;font-size:11px;color:#30343f;transform:scaleX(0.9444);">/io/sctest1001__io....</div>
<div class="t" id="t139" style="left:1047.20px;top:673.15px;font-size:11px;color:#5667bb;transform:scaleX(1.0227);">编辑</div>
<div class="t" id="t140" style="left:1081.90px;top:673.15px;font-size:11px;color:#5667bb;transform:scaleX(0.9909);">发布</div>
<div class="t" id="t141" style="left:1116.80px;top:673.15px;font-size:11px;color:#5667bb;transform:scaleX(0.9909);">更多</div>
<div class="t" id="t142" style="left:244.00px;top:718.10px;font-size:11px;color:#5667bb;transform:scaleX(0.9218);">apic_IOT查询单个终<span style="display:inline-block;color:#3a3f4c">...</span></div>
<div class="t" id="t143" style="left:244.00px;top:733.60px;font-size:11px;color:#30343f;transform:scaleX(0.9442);">40d7969289ab480c...</div>
<div class="t" id="t144" style="left:391.70px;top:726.05px;font-size:11px;color:#30343f;transform:scaleX(0.8118);">RELEASE</div>
<div class="t" id="t145" style="left:504.10px;top:726.05px;font-size:11px;color:#30343f;transform:scaleX(0.9520);">e9f3883911874d8...</div>
<div class="t" id="t146" style="left:616.50px;top:726.05px;font-size:11px;color:#30343f;transform:scaleX(1.0917);">--</div>
<div class="t" id="t147" style="left:728.30px;top:726.05px;font-size:11px;color:#30343f;transform:scaleX(0.8380);">POST</div>
<div class="t" id="t148" style="left:822.70px;top:726.05px;font-size:11px;color:#30343f;transform:scaleX(0.9841);">绝对匹配</div>
<div class="t" id="t149" style="left:935.40px;top:726.05px;font-size:11px;color:#30343f;transform:scaleX(0.9444);">/io/sctest1001__io....</div>
<div class="t" id="t150" style="left:1047.20px;top:726.05px;font-size:11px;color:#5667bb;transform:scaleX(1.0227);">编辑</div>
<div class="t" id="t151" style="left:1081.90px;top:726.05px;font-size:11px;color:#5667bb;transform:scaleX(0.9909);">发布</div>
<div class="t" id="t152" style="left:1116.80px;top:726.05px;font-size:11px;color:#5667bb;transform:scaleX(0.9909);">更多</div>
<div class="t" id="t153" style="left:407.40px;top:242.50px;font-size:11px;color:#ffffff;transform:scaleX(0.9328);z-index:2;-webkit-text-stroke:0.2px #fff;">apic_IOT批量查询终端基础信息（敢为）</div>
<div class="t" id="t154" style="left:407.40px;top:257.20px;font-size:11px;color:#ffffff;transform:scaleX(0.9565);z-index:2;-webkit-text-stroke:0.2px #fff;">2f20d4a724f941aa9d1b3971bcee4636</div>
<div class="t" id="t155" style="left:209.30px;top:770.60px;font-size:11px;color:#30343f;transform:scaleX(0.9633);">10</div>
<div class="t" id="t156" style="left:264.30px;top:770.30px;font-size:11px;color:#575d6c;transform:scaleX(0.9463);">总条数: 53</div>
<div class="t" id="t157" style="left:357.40px;top:770.30px;font-size:11px;color:#575d6c;transform:scaleX(1.1102);">1</div>
<div class="t" id="t158" style="left:380.50px;top:770.30px;font-size:11px;color:#575d6c;transform:scaleX(1.1102);">2</div>
<div class="t" id="t159" style="left:404.10px;top:770.30px;font-size:11px;color:#575d6c;transform:scaleX(1.1102);">3</div>
<div class="t" id="t160" style="left:426.30px;top:770.30px;font-size:11px;color:#575d6c;transform:scaleX(1.1102);">4</div>
<div class="t" id="t161" style="left:449.40px;top:770.30px;font-size:11px;color:#575d6c;transform:scaleX(1.1102);">5</div>
<div class="t" id="t162" style="left:472.90px;top:770.30px;font-size:11px;color:#575d6c;transform:scaleX(1.1102);">6</div>
<div class="t" id="t163" style="left:982.90px;top:741.30px;font-size:18px;color:rgba(120,120,120,0.40);transform:scaleX(1.1251);">激活 Windows</div>
<div class="t" id="t164" style="left:982.90px;top:763.20px;font-size:13px;color:rgba(120,120,120,0.40);transform:scaleX(1.1407);">转到“设置”以激活 Windows。</div>
<script>(function(){var W={"t0":108.4,"t1":41.6,"t2":41.6,"t3":52,"t4":60.9,"t5":66.7,"t6":36.1,"t7":36.1,"t8":51.6,"t9":67.3,"t10":66.7,"t11":48,"t12":43.19999999999999,"t13":42,"t14":48.69999999999999,"t15":48.799999999999955,"t16":49,"t17":49,"t18":48.700000000000045,"t19":61.10000000000002,"t20":68.0,"t21":24.40000000000009,"t22":66.90000000000009,"t23":201.5,"t24":363.6,"t25":48.2,"t26":110.99999999999996,"t27":254.99999999999994,"t28":36,"t29":36.4,"t30":42.5,"t31":20.5,"t32":31.5,"t33":65,"t34":62.3,"t35":21,"t36":20.5,"t37":35.3,"t38":51.2,"t39":20.5,"t40":41.2,"t41":41,"t42":41.2,"t43":41.2,"t44":20.5,"t45":99.7,"t46":102,"t47":7.2,"t48":24.3,"t49":42.5,"t50":94.5,"t51":21.7,"t52":21,"t53":21,"t54":101,"t55":102.3,"t56":40.4,"t57":91.6,"t58":7.2,"t59":24.3,"t60":42.5,"t61":94.5,"t62":21.7,"t63":21,"t64":21,"t65":99.5,"t66":99.7,"t67":40.4,"t68":91.6,"t69":7.2,"t70":24.3,"t71":42.5,"t72":94.5,"t73":21.7,"t74":21,"t75":21,"t76":99,"t77":98.6,"t78":40.4,"t79":91.6,"t80":7.2,"t81":24.3,"t82":42.5,"t83":94.5,"t84":21.7,"t85":21,"t86":21,"t87":99.5,"t88":100.4,"t89":40.4,"t90":91.6,"t91":7.2,"t92":24.3,"t93":42.5,"t94":94.5,"t95":21.7,"t96":21,"t97":21,"t98":99,"t99":98.6,"t100":40.4,"t101":91.6,"t102":7.2,"t103":24.3,"t104":42.5,"t105":94.5,"t106":21.7,"t107":21,"t108":21,"t109":99.5,"t110":103.3,"t111":40.4,"t112":91.6,"t113":7.2,"t114":24.3,"t115":42.5,"t116":94.5,"t117":21.7,"t118":21,"t119":21,"t120":99.5,"t121":102.5,"t122":40.4,"t123":91.6,"t124":7.2,"t125":24.3,"t126":42.5,"t127":94.5,"t128":21.7,"t129":21,"t130":21,"t131":99.5,"t132":100.4,"t133":40.4,"t134":91.6,"t135":7.2,"t136":24.3,"t137":42.5,"t138":94.5,"t139":21.7,"t140":21,"t141":21,"t142":99.5,"t143":99.7,"t144":40.4,"t145":91.6,"t146":7.2,"t147":24.3,"t148":42.5,"t149":94.5,"t150":21.7,"t151":21,"t152":21,"t153":184.5,"t154":180,"t155":11,"t156":47.8,"t157":6,"t158":6,"t159":6,"t160":6,"t161":6,"t162":6,"t163":127.5,"t164":192};var els=[],k;for(k in W){var e=document.getElementById(k);if(e){els.push([e,W[k]]);e.style.transform="none";}}var ws=els.map(function(p){var r=document.createRange();r.selectNodeContents(p[0]);return r.getBoundingClientRect().width;});els.forEach(function(p,i){if(ws[i]>0)p[0].style.transform="scaleX("+((p[1]+0.8)/ws[i]).toFixed(4)+")";});})();</script>
</body></html>
